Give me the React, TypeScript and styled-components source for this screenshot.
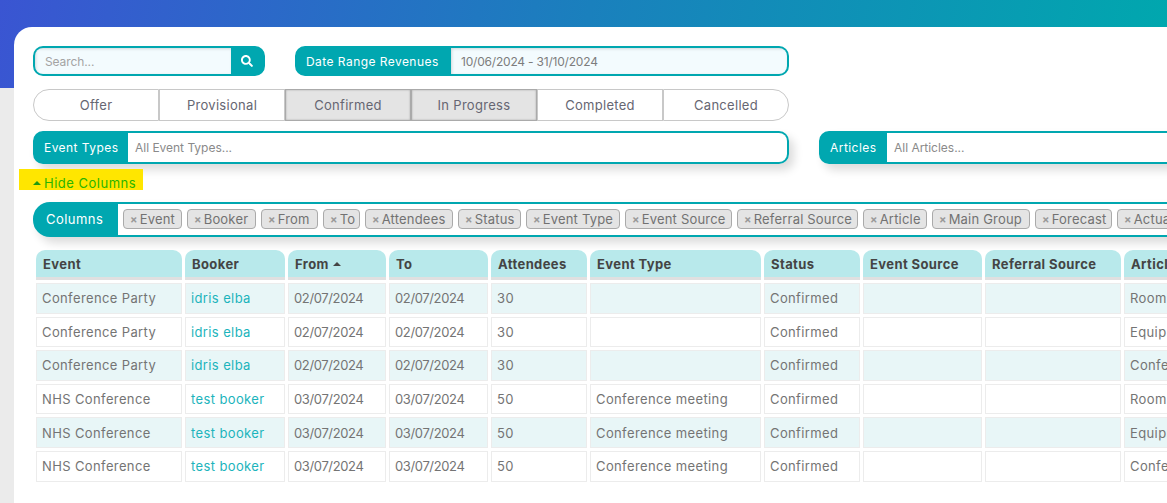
import React from "react";
import styled, { createGlobalStyle } from "styled-components";
import { FaSearch } from "react-icons/fa";

const teal = "#00a7b0";

const Global = createGlobalStyle`
  html, body { margin: 0; padding: 0; height: 100%; overflow: hidden; }
  body { font-family: Inter, "Noto Sans", "Liberation Sans", sans-serif; }
  #root { height: 100%; }
`;

const Page = styled.div`
  height: 503px;
  width: 1167px;
  overflow: hidden;
  box-sizing: border-box;
  padding: 27px 0 0 14px;
  background:
    linear-gradient(100deg, #3a55d2 0%, #1a80bd 50%, #00a8ae 100%) top left / 100% 88px no-repeat,
    #ebebeb;
`;

const Card = styled.main`
  width: 1400px;
  height: 476px;
  box-sizing: border-box;
  background: #fff;
  border-top-left-radius: 18px;
  padding: 19px 0 0 19px;
  display: flex;
  flex-direction: column;
  align-items: flex-start;
`;

const TopRow = styled.div`
  display: flex;
  gap: 30px;
  height: 30px;
`;

const SearchGroup = styled.div`
  width: 232px;
  height: 30px;
  box-sizing: border-box;
  display: flex;
  border: 2px solid ${teal};
  border-radius: 10px;
  overflow: hidden;
  background: ${teal};
`;

const FieldText = styled.div<{ $pad: number }>`
  flex: 1;
  min-width: 0;
  display: flex;
  align-items: center;
  padding-left: ${(p) => p.$pad}px;
  background: #f3fbfe;
  box-shadow: inset 1px 1px 3px rgba(0, 0, 0, 0.14);
  font-size: 12px;
  letter-spacing: -0.1px;
  color: #a3a3a3;
`;

const DateText = styled(FieldText)`
  color: #7d7d7d;
  letter-spacing: -0.2px;
`;

const SearchButton = styled.div`
  width: 32px;
  display: flex;
  align-items: center;
  justify-content: center;
  color: #fff;
  font-size: 12px;
`;

const DateGroup = styled(SearchGroup)`
  width: 494px;
`;

const GroupLabel = styled.div`
  display: flex;
  align-items: center;
  color: #fff;
  background: ${teal};
  font-size: 12px;
  font-weight: 400;
  letter-spacing: 0.45px;
  white-space: nowrap;
`;

const DateLabel = styled(GroupLabel)`
  width: 154px;
  padding-left: 9px;
  box-sizing: border-box;
`;

const StatusRow = styled.div`
  margin-top: 13px;
  width: 756px;
  height: 32px;
  display: flex;
`;

const StatusButton = styled.div<{ $active?: boolean; $pos?: "first" | "last" }>`
  flex: 1;
  box-sizing: border-box;
  display: flex;
  align-items: center;
  justify-content: center;
  border: 1px solid ${(p) => (p.$active ? "#aaaaaa" : "#c8c8c8")};
  border-radius: ${(p) => (p.$pos === "first" ? "16px 0 0 16px" : p.$pos === "last" ? "0 16px 16px 0" : "0")};
  background: ${(p) => (p.$active ? "#e4e4e4" : "#fff")};
  box-shadow: ${(p) => (p.$active ? "inset 0 0 2px rgba(0,0,0,0.28)" : "none")};
  font-size: 13px;
  letter-spacing: 0.3px;
  color: #666672;
`;

const FilterRow = styled.div`
  margin-top: 10px;
  display: flex;
  gap: 30px;
`;

const ShadowWrap = styled.div`
  border-radius: 10px;
  box-shadow: 5px 6px 10px rgba(0, 0, 0, 0.14);
`;

const FilterGroup = styled.div<{ $w: number }>`
  width: ${(p) => p.$w}px;
  height: 33px;
  box-sizing: border-box;
  display: flex;
  border: 2px solid ${teal};
  border-radius: 10px;
  overflow: hidden;
  background: ${teal};
`;

const FilterLabel = styled(GroupLabel)<{ $w: number }>`
  width: ${(p) => p.$w}px;
  box-sizing: border-box;
  padding-left: 9px;
  padding-bottom: 1px;
`;

const FilterText = styled.div`
  flex: 1;
  display: flex;
  align-items: center;
  padding-left: 7px;
  background: #fff;
  font-size: 12px;
  letter-spacing: -0.02px;
  color: #8a8a8a;
`;

const HideColumns = styled.div`
  margin: 5px 0 0 -14px;
  width: 124px;
  height: 21px;
  box-sizing: border-box;
  padding: 6px 0 0 14px;
  display: flex;
  align-items: center;
  gap: 3px;
  background: #ffe600;
  color: #2ab500;
  font-size: 13px;
  letter-spacing: 0.5px;
  white-space: nowrap;
`;

const Caret = styled.span<{ $color?: string }>`
  width: 0;
  height: 0;
  border-left: 4px solid transparent;
  border-right: 4px solid transparent;
  border-bottom: 4px solid ${(p) => p.$color || "#1f9a10"};
  display: inline-block;
`;

const ColumnsBar = styled.div`
  margin-top: 12px;
  width: 1300px;
  height: 35px;
  box-sizing: border-box;
  display: flex;
  border: 2px solid ${teal};
  border-radius: 17px 0 0 17px;
  box-shadow: 5px 6px 10px rgba(0, 0, 0, 0.14);
  background: ${teal};
  overflow: hidden;
`;

const ColumnsLabel = styled(GroupLabel)`
  width: 83px;
  box-sizing: border-box;
  padding-left: 11px;
  font-size: 13px;
  padding-bottom: 1px;
`;

const Chips = styled.div`
  flex: 1;
  display: flex;
  align-items: center;
  gap: 5px;
  padding: 0 0 1px 5px;
  background: #fff;
`;

const Chip = styled.span<{ $w: number }>`
  width: ${(p) => p.$w}px;
  height: 20px;
  box-sizing: border-box;
  padding: 0 0 0 6px;
  display: flex;
  align-items: center;
  gap: 2px;
  border: 1px solid #aaa;
  border-radius: 4px;
  background: #e4e4e4;
  color: #727272;
  font-size: 13px;
  letter-spacing: 0.2px;
  white-space: nowrap;
`;

const ChipX = styled.span`
  color: #999;
  font-size: 11px;
  font-weight: 700;
  line-height: 1;
`;

const Table = styled.table`
  margin-top: 10px;
  border-collapse: separate;
  border-spacing: 3px;
  table-layout: fixed;
  width: 1194px;
  font-size: 13px;
`;

const Th = styled.th`
  height: 27px;
  padding: 0 7px;
  background: #b8e9eb;
  border-bottom: 3px solid #e0e0e0;
  border-radius: 9px 9px 0 0;
  text-align: left;
  font-weight: 700;
  color: #444;
  letter-spacing: 0.4px;
  white-space: nowrap;
  overflow: hidden;
`;

const HeadInner = styled.span`
  display: inline-flex;
  align-items: center;
  gap: 4px;
`;

const Tr = styled.tr<{ $tint: boolean }>`
  background: ${(p) => (p.$tint ? "#e8f6f7" : "#fff")};
`;

const Td = styled.td<{ $tight?: boolean }>`
  height: 28.6px;
  padding: 0 5px;
  border: 1px solid #ececec;
  color: #747474;
  letter-spacing: ${(p) => (p.$tight ? "-0.37px" : "0.38px")};
  white-space: nowrap;
  overflow: hidden;
`;

const BookerLink = styled.a`
  color: #1cb4bc;
  text-decoration: none;
`;

const columns: [string, number][] = [
  ["Event", 146], ["Booker", 100], ["From", 98], ["To", 99], ["Attendees", 96],
  ["Event Type", 171], ["Status", 96], ["Event Source", 119], ["Referral Source", 136], ["Article", 100],
];

const chips: [string, number][] = [
  ["Event", 59], ["Booker", 69], ["From", 57], ["To", 37], ["Attendees", 88], ["Status", 63],
  ["Event Type", 94], ["Event Source", 107], ["Referral Source", 121], ["Article", 64],
  ["Main Group", 98], ["Forecast", 77], ["Actual", 64],
];

const rows = [
  ["Conference Party", "idris elba", "02/07/2024", "02/07/2024", "30", "", "Confirmed", "", "", "Room"],
  ["Conference Party", "idris elba", "02/07/2024", "02/07/2024", "30", "", "Confirmed", "", "", "Equipment"],
  ["Conference Party", "idris elba", "02/07/2024", "02/07/2024", "30", "", "Confirmed", "", "", "Conference"],
  ["NHS Conference", "test booker", "03/07/2024", "03/07/2024", "50", "Conference meeting", "Confirmed", "", "", "Room"],
  ["NHS Conference", "test booker", "03/07/2024", "03/07/2024", "50", "Conference meeting", "Confirmed", "", "", "Equipment"],
  ["NHS Conference", "test booker", "03/07/2024", "03/07/2024", "50", "Conference meeting", "Confirmed", "", "", "Conference"],
];

const statuses = [
  { t: "Offer", pos: "first" as const },
  { t: "Provisional" },
  { t: "Confirmed", active: true },
  { t: "In Progress", active: true },
  { t: "Completed" },
  { t: "Cancelled", pos: "last" as const },
];

export default function App() {
  return (
    <Page>
      <Global />
      <Card>
        <TopRow>
          <SearchGroup>
            <FieldText $pad={10}>Search...</FieldText>
            <SearchButton><FaSearch /></SearchButton>
          </SearchGroup>
          <DateGroup>
            <DateLabel>Date Range Revenues</DateLabel>
            <DateText $pad={10}>10/06/2024 - 31/10/2024</DateText>
          </DateGroup>
        </TopRow>
        <StatusRow>
          {statuses.map((s) => (
            <StatusButton key={s.t} $active={s.active} $pos={s.pos}>{s.t}</StatusButton>
          ))}
        </StatusRow>
        <FilterRow>
          <ShadowWrap>
            <FilterGroup $w={756}>
              <FilterLabel $w={93}>Event Types</FilterLabel>
              <FilterText>All Event Types...</FilterText>
            </FilterGroup>
          </ShadowWrap>
          <ShadowWrap>
            <FilterGroup $w={500}>
              <FilterLabel $w={66}>Articles</FilterLabel>
              <FilterText>All Articles...</FilterText>
            </FilterGroup>
          </ShadowWrap>
        </FilterRow>
        <HideColumns><Caret />Hide Columns</HideColumns>
        <ColumnsBar>
          <ColumnsLabel>Columns</ColumnsLabel>
          <Chips>
            {chips.map(([c, w]) => (
              <Chip key={c} $w={w}><ChipX>×</ChipX>{c}</Chip>
            ))}
          </Chips>
        </ColumnsBar>
        <Table>
          <colgroup>
            {columns.map(([n, w]) => <col key={n} style={{ width: w }} />)}
          </colgroup>
          <thead>
            <tr>
              {columns.map(([n]) => (
                <Th key={n}>
                  <HeadInner>{n}{n === "From" && <Caret $color="#444" />}</HeadInner>
                </Th>
              ))}
            </tr>
          </thead>
          <tbody>
            {rows.map((r, i) => (
              <Tr key={i} $tint={i % 2 === 0}>
                {r.map((v, j) => (
                  <Td key={j} $tight={j === 2 || j === 3}>{j === 1 ? <BookerLink>{v}</BookerLink> : v}</Td>
                ))}
              </Tr>
            ))}
          </tbody>
        </Table>
      </Card>
    </Page>
  );
}
